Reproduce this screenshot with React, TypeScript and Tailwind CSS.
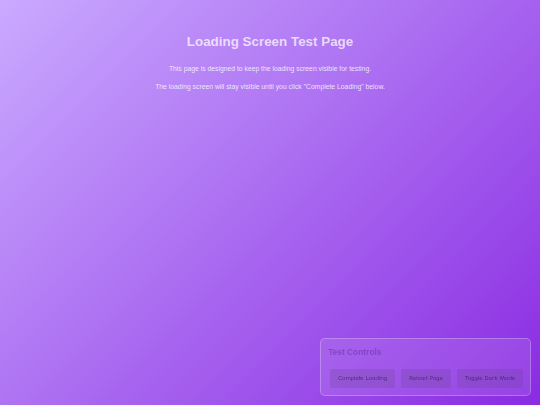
import React from "react";

export default function App() {
  return (
    <div className="relative h-[405px] w-[540px] overflow-hidden bg-[linear-gradient(135deg,#caaaff_0%,#8a2be2_100%)] font-['Liberation_Sans',Arial,sans-serif]">
      <div className="flex flex-col items-center pt-[33px] text-center">
        <h1 className="text-[13.4px] font-bold leading-[18px] text-[rgba(255,255,255,0.72)]">
          Loading Screen Test Page
        </h1>
        <p className="mt-[13px] text-[6.8px] leading-[10px] text-[rgba(255,255,255,0.8)]">
          This page is designed to keep the loading screen visible for testing.
        </p>
        <p className="mt-[8px] text-[6.8px] leading-[10px] text-[rgba(255,255,255,0.8)]">
          The loading screen will stay visible until you click "Complete Loading" below.
        </p>
      </div>
      <div className="fixed bottom-[9px] right-[9px] rounded-[5px] border border-[rgba(255,255,255,0.25)] bg-[rgba(255,255,255,0.1)] px-[7px] pb-[7px] pt-[7px]">
        <div className="text-[8.4px] font-bold leading-[12px] text-[rgba(90,40,150,0.45)]">Test Controls</div>
        <div className="mt-[11px] flex gap-[6px] pl-[2px]">
          <button className="h-[19px] rounded-[2px] bg-[rgba(100,70,140,0.24)] px-[8px] font-['Comic_Sans_MS','Comic_Neue',cursive] text-[6.4px] text-[#3b2a5c]">
            Complete Loading
          </button>
          <button className="h-[19px] rounded-[2px] bg-[rgba(100,70,140,0.24)] px-[8px] font-['Comic_Sans_MS','Comic_Neue',cursive] text-[6.4px] text-[#3b2a5c]">
            Reload Page
          </button>
          <button className="h-[19px] rounded-[2px] bg-[rgba(100,70,140,0.24)] px-[8px] font-['Comic_Sans_MS','Comic_Neue',cursive] text-[6.4px] text-[#3b2a5c]">
            Toggle Dark Mode
          </button>
        </div>
      </div>
    </div>
  );
}
